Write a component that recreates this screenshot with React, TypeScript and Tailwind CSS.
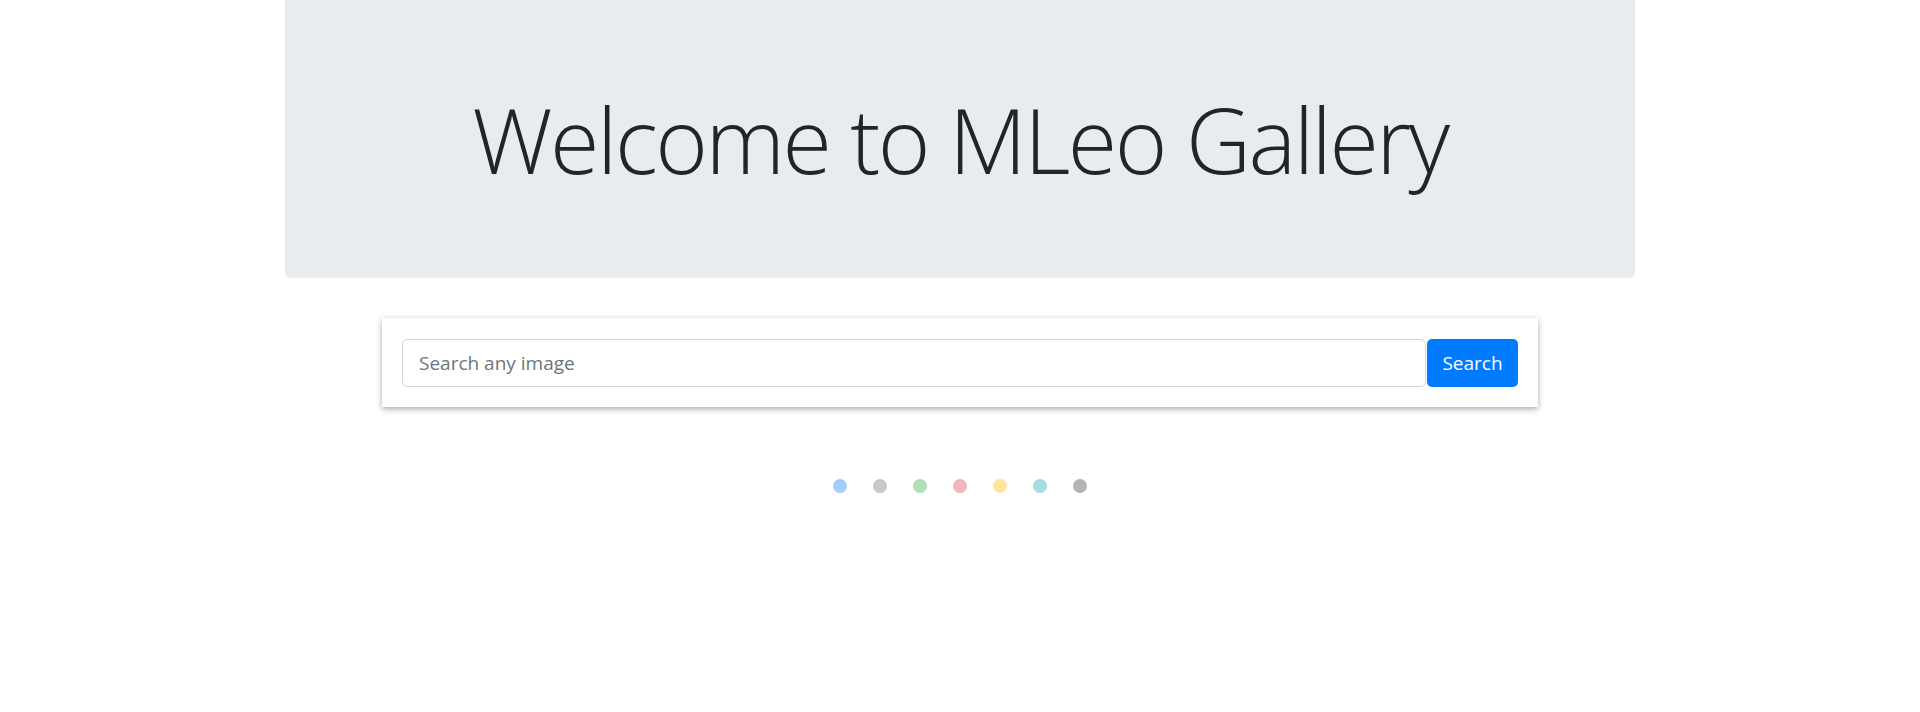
import React from 'react';

const dots = ['#a3cdff', '#c6c9cc', '#b0dfba', '#f2b5bb', '#ffe59c', '#a6dce4', '#b3b4b5'];

const App: React.FC = () => {
  return (
    <div className="min-h-[712px] bg-white font-['Open_Sans',_'Liberation_Sans',_sans-serif] text-[#212529]">
      <div className="mx-auto w-[1350px]">
        <div className="flex h-[278px] items-center justify-center rounded-b-[5px] bg-[#e9ecef]">
          <h1 className="text-[90px] font-light leading-none tracking-[-2.5px]">Welcome to MLeo Gallery</h1>
        </div>
      </div>

      <div className="mx-auto mt-[40px] w-[1156px] bg-white px-5 pb-5 pt-[21px] shadow-[0_2px_6px_rgba(0,0,0,0.35)]">
        <form className="flex" onSubmit={(e) => e.preventDefault()}>
          <input
            type="text"
            placeholder="Search any image"
            className="h-12 flex-1 rounded-[5px] border border-[#ced4da] px-4 text-[19px] text-[#495057] outline-none placeholder:text-[#6c757d]"
          />
          <button
            type="submit"
            className="ml-px h-12 w-[91px] rounded-[5px] bg-[#007bff] text-[19px] text-white"
          >
            Search
          </button>
        </form>
      </div>

      <div className="mt-[72px] flex justify-center gap-[26px]">
        {dots.map((c) => (
          <span key={c} className="block h-[14px] w-[14px] rounded-full" style={{ backgroundColor: c }} />
        ))}
      </div>
    </div>
  );
};

export default App;
